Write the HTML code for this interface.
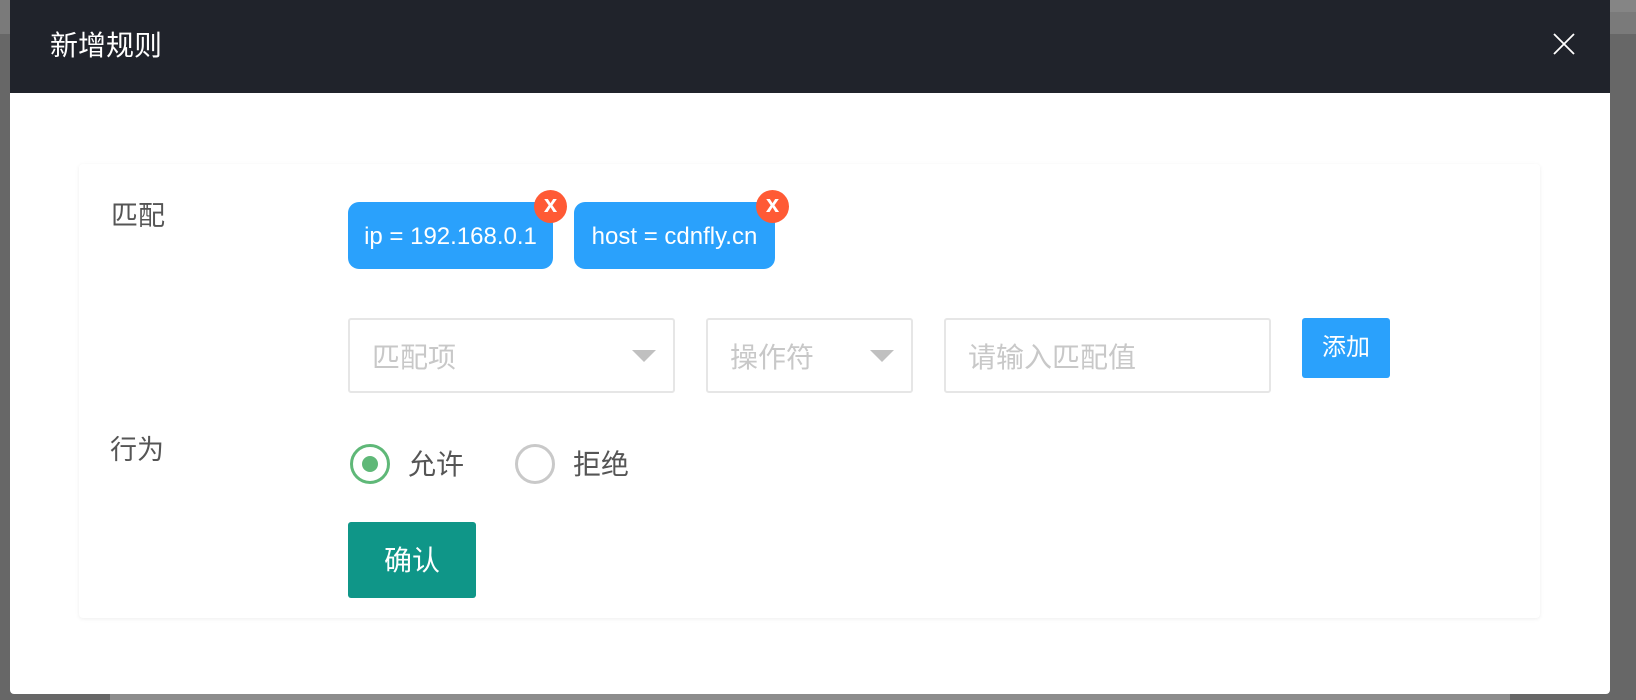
<!DOCTYPE html>
<html><head><meta charset="utf-8"><style>
*{margin:0;padding:0;box-sizing:border-box}
body{width:1636px;height:700px;background:#676767;position:relative;overflow:hidden;font-family:"Liberation Sans","Noto Sans CJK SC",sans-serif}
.a{position:absolute}
</style></head><body>
<div class="a" style="left:1610px;top:0;width:26px;height:12px;background:#858585"></div>
<div class="a" style="left:1610px;top:12px;width:26px;height:22px;background:#7a7a7a"></div>
<div class="a" style="left:0;top:0;width:10px;height:34px;background:#7a7a7a"></div>
<div class="a" style="left:110px;top:694px;width:1400px;height:6px;background:#8d8d8d"></div>
<div class="a" style="left:10px;top:0;width:1600px;height:694px;background:#fff;border-radius:0 0 4px 4px"></div>
<div class="a" style="left:10px;top:0;width:1600px;height:93px;background:#20232b"></div>
<div class="a" style="left:50px;top:28px;color:#fff;font-size:28px;line-height:36px">新增规则</div>
<svg class="a" style="left:1553px;top:33px" width="22" height="22"><path d="M1 1L21 21M21 1L1 21" stroke="#fff" stroke-width="1.8"/></svg>
<div class="a" style="left:79px;top:164px;width:1461px;height:454px;background:#fff;border-radius:4px;box-shadow:0 1px 4px rgba(0,0,0,.07)"></div>
<div class="a" style="left:111px;top:199px;color:#555;font-size:27px;line-height:34px">匹配</div>
<div class="a" style="left:348px;top:202px;width:205px;height:67px;background:#2aa1fc;border-radius:11px;color:#fff;font-size:24px;line-height:69px;text-align:center;white-space:nowrap">ip = 192.168.0.1</div>
<div class="a" style="left:534px;top:190px;width:33px;height:33px;background:#ff5a35;border-radius:50%;color:#fff;font-size:24px;line-height:29px;text-align:center;font-weight:bold">x</div>
<div class="a" style="left:574px;top:202px;width:201px;height:67px;background:#2aa1fc;border-radius:11px;color:#fff;font-size:24px;line-height:69px;text-align:center;white-space:nowrap">host = cdnfly.cn</div>
<div class="a" style="left:756px;top:190px;width:33px;height:33px;background:#ff5a35;border-radius:50%;color:#fff;font-size:24px;line-height:29px;text-align:center;font-weight:bold">x</div>
<div class="a" style="left:348px;top:318px;width:327px;height:75px;border:2px solid #e6e6e6;border-radius:3px;color:#c8c8c8;font-size:28px;line-height:75px;padding-left:22px">匹配项</div>
<div class="a" style="left:632px;top:350px;width:0;height:0;border-left:12px solid transparent;border-right:12px solid transparent;border-top:12px solid #c0c0c0"></div>
<div class="a" style="left:706px;top:318px;width:207px;height:75px;border:2px solid #e6e6e6;border-radius:3px;color:#c8c8c8;font-size:28px;line-height:75px;padding-left:22px">操作符</div>
<div class="a" style="left:870px;top:350px;width:0;height:0;border-left:12px solid transparent;border-right:12px solid transparent;border-top:12px solid #c0c0c0"></div>
<div class="a" style="left:944px;top:318px;width:327px;height:75px;border:2px solid #e6e6e6;border-radius:3px;color:#c8c8c8;font-size:28px;line-height:75px;padding-left:22px">请输入匹配值</div>
<div class="a" style="left:1302px;top:318px;width:88px;height:60px;background:#2aa1fc;border-radius:3px;color:#fff;font-size:24px;line-height:60px;text-align:center">添加</div>
<div class="a" style="left:110px;top:433px;color:#555;font-size:27px;line-height:34px">行为</div>
<div class="a" style="left:350px;top:444px;width:40px;height:40px;border:3px solid #5fb878;border-radius:50%"></div>
<div class="a" style="left:362px;top:456px;width:16px;height:16px;background:#5fb878;border-radius:50%"></div>
<div class="a" style="left:408px;top:447px;color:#555;font-size:28px;line-height:36px">允许</div>
<div class="a" style="left:515px;top:444px;width:40px;height:40px;border:3px solid #c9c9c9;border-radius:50%"></div>
<div class="a" style="left:573px;top:447px;color:#555;font-size:28px;line-height:36px">拒绝</div>
<div class="a" style="left:348px;top:522px;width:128px;height:76px;background:#0f9688;border-radius:3px;color:#fff;font-size:28px;line-height:78px;text-align:center">确认</div>
</body></html>
